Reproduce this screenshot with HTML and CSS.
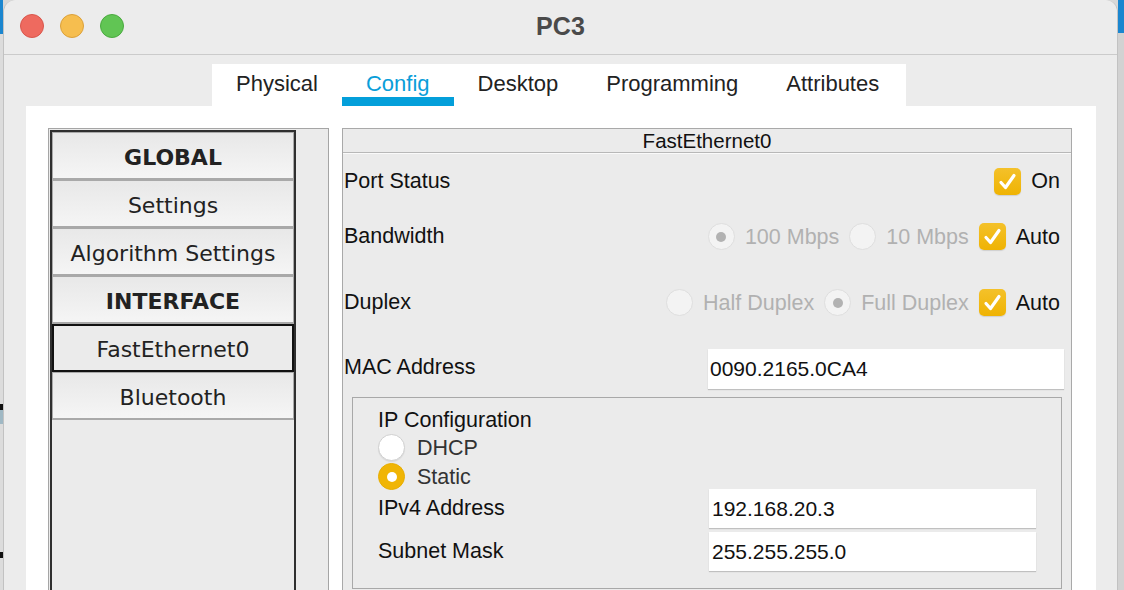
FILE: index.html
```html
<!DOCTYPE html>
<html>
<head>
<meta charset="utf-8">
<title>PC3</title>
<link rel="stylesheet" href="styles.css">
</head>
<body>
<div class="desk desk-left"></div>
<div class="window">
  <div class="titlebar">
    <div class="lights">
      <span class="light red"></span>
      <span class="light yellow"></span>
      <span class="light green"></span>
    </div>
    <div class="title">PC3</div>
    <div class="spacer"></div>
  </div>
  <div class="tabs-wrap">
    <div class="tabs">
      <div class="tab">Physical</div>
      <div class="tab active">Config</div>
      <div class="tab">Desktop</div>
      <div class="tab">Programming</div>
      <div class="tab">Attributes</div>
    </div>
  </div>
  <div class="content">
    <div class="sidebar">
      <div class="list">
        <div class="item bold">GLOBAL</div>
        <div class="item">Settings</div>
        <div class="item">Algorithm Settings</div>
        <div class="item bold">INTERFACE</div>
        <div class="item selected">FastEthernet0</div>
        <div class="item">Bluetooth</div>
      </div>
    </div>
    <div class="panel">
      <div class="panel-head">FastEthernet0</div>
      <div class="row row-port">
        <span class="label">Port Status</span>
        <div class="controls">
          <span class="check"><svg viewBox="0 0 27 27" width="27" height="27"><path d="M7 14.5 L11.5 19.5 L20 7.5" fill="none" stroke="#fff" stroke-width="3.2" stroke-linecap="round" stroke-linejoin="round"/></svg></span>
          <span class="opt-text">On</span>
        </div>
      </div>
      <div class="row row-bw">
        <span class="label">Bandwidth</span>
        <div class="controls">
          <span class="radio dis on"></span>
          <span class="opt-text dis">100 Mbps</span>
          <span class="radio dis"></span>
          <span class="opt-text dis">10 Mbps</span>
          <span class="check"><svg viewBox="0 0 27 27" width="27" height="27"><path d="M7 14.5 L11.5 19.5 L20 7.5" fill="none" stroke="#fff" stroke-width="3.2" stroke-linecap="round" stroke-linejoin="round"/></svg></span>
          <span class="opt-text">Auto</span>
        </div>
      </div>
      <div class="row row-dup">
        <span class="label">Duplex</span>
        <div class="controls">
          <span class="radio dis"></span>
          <span class="opt-text dis">Half Duplex</span>
          <span class="radio dis on"></span>
          <span class="opt-text dis">Full Duplex</span>
          <span class="check"><svg viewBox="0 0 27 27" width="27" height="27"><path d="M7 14.5 L11.5 19.5 L20 7.5" fill="none" stroke="#fff" stroke-width="3.2" stroke-linecap="round" stroke-linejoin="round"/></svg></span>
          <span class="opt-text">Auto</span>
        </div>
      </div>
      <div class="row row-mac">
        <span class="label">MAC Address</span>
        <div class="field mac">0090.2165.0CA4</div>
      </div>
      <div class="ipbox">
        <div class="ip-title">IP Configuration</div>
        <div class="radio-row">
          <span class="radio white"></span>
          <span class="opt-text">DHCP</span>
        </div>
        <div class="radio-row">
          <span class="radio yellow"></span>
          <span class="opt-text">Static</span>
        </div>
        <div class="ip-row ip-first">
          <span class="label">IPv4 Address</span>
          <div class="field ipf">192.168.20.3</div>
        </div>
        <div class="ip-row ip-second">
          <span class="label">Subnet Mask</span>
          <div class="field ipf">255.255.255.0</div>
        </div>
      </div>
    </div>
  </div>
</div>
<div class="desk desk-right"></div>
</body>
</html>
```
FILE: styles.css
```css
html, body {
  margin: 0;
  padding: 0;
  width: 1124px;
  height: 590px;
  overflow: hidden;
}
body {
  display: flex;
  font-family: "Liberation Sans", Arial, sans-serif;
  color: #111;
  background: #d8d8d8;
}
.desk {
  flex: none;
  height: 590px;
}
.desk-left {
  width: 3px;
  background: linear-gradient(to bottom, #1b86cf 0 34px, #dcdcdc 34px 404px, #111 404px 410px, #9fb8c4 410px 424px, #dcdcdc 424px 552px, #111 552px 558px, #dcdcdc 558px);
}
.desk-right {
  width: 6px;
  background: linear-gradient(to bottom, #1b86cf 0 33px, #d2d2d2 33px);
}
.window {
  flex: none;
  width: 1113px;
  height: 590px;
  background: #ececec;
  border-left: 1px solid #c2c2c2;
  border-right: 1px solid #c2c2c2;
  border-radius: 12px 12px 0 0;
  display: flex;
  flex-direction: column;
}

/* title bar */
.titlebar {
  flex: none;
  border-bottom: 1px solid #cbcbcb;
  display: grid;
  grid-template-columns: 1fr auto 1fr;
  align-items: center;
  padding-bottom: 2px;
  box-sizing: border-box;
  height: 55px;
}
.lights {
  display: flex;
  gap: 16px;
  padding-left: 16px;
}
.light {
  width: 24px;
  height: 24px;
  border-radius: 50%;
  box-sizing: border-box;
}
.red { background: #ee6a5f; border: 1px solid #d9564c; }
.yellow { background: #f6be4f; border: 1px solid #dca13a; }
.green { background: #61c554; border: 1px solid #4aaa3f; }
.title {
  font-weight: bold;
  font-size: 25px;
  color: #4a4a4a;
  letter-spacing: 0.2px;
}

/* tabs */
.tabs-wrap {
  flex: none;
  display: flex;
  justify-content: center;
  padding-top: 9px;
  padding-right: 3px;
}
.tabs {
  display: flex;
  background: #fff;
  width: 694px;
}
.tab {
  height: 42px;
  box-sizing: border-box;
  padding: 6px 24px 0;
  border-bottom: 9px solid transparent;
  font-size: 22px;
  line-height: 27px;
  color: #222;
}
.tab.active {
  color: #0a9ed9;
  border-bottom-color: #049fda;
}

/* content */
.content {
  flex: 1;
  background: #fff;
  margin: 0 21px 0 22px;
  padding: 22px 24px 0 22px;
  display: flex;
  gap: 13px;
  overflow: hidden;
}

/* sidebar */
.sidebar {
  width: 281px;
  flex: none;
  box-sizing: border-box;
  border: 1px solid #a5a5a5;
  background: #ebebeb;
  padding: 1px;
  height: 600px;
}
.list {
  width: 246px;
  box-sizing: border-box;
  border: 2px solid #2f2f2f;
  height: 100%;
  background: #ebebeb;
  font-family: "DejaVu Sans", Verdana, sans-serif;
  font-size: 22px;
  color: #222;
}
.item {
  height: 48px;
  box-sizing: border-box;
  border: 1px solid #a9a9a9;
  border-bottom-width: 2px;
  padding-top: 3px;
  background: linear-gradient(to bottom, #e8e8e8, #f5f5f5);
  display: flex;
  align-items: center;
  justify-content: center;
}
.item.bold {
  font-weight: bold;
}
.item.selected {
  border: 2px solid #111;
  padding-top: 2px;
  background: #ebebeb;
}

/* main panel */
.panel {
  width: 730px;
  flex: none;
  box-sizing: border-box;
  border: 1px solid #a9a9a9;
  background: #ebebeb;
  height: 600px;
  font-size: 21.5px;
}
.panel-head {
  height: 23px;
  border-bottom: 1px solid #b8b8b8;
  box-shadow: 0 1px 0 #fafafa;
  text-align: center;
  font-size: 20.5px;
  line-height: 23px;
  color: #111;
}
.row {
  display: flex;
  align-items: center;
  justify-content: space-between;
  padding: 0 11px 0 1px;
}
.row-port { height: 56px; }
.row-bw { height: 55px; }
.row-dup { height: 77px; }
.row-mac { height: 52px; padding-right: 7px; }
.label {
  color: #111;
}
.controls {
  display: flex;
  align-items: center;
  gap: 10px;
}
.opt-text {
  color: #111;
  line-height: 28px;
}
.opt-text.dis {
  color: #b1b1b1;
}
.check {
  width: 27px;
  height: 27px;
  border-radius: 5px;
  background: linear-gradient(to bottom, #f4c12a, #efb303);
  display: block;
  box-shadow: 0 1px 1px rgba(0,0,0,0.12);
}
.check svg { display: block; }
.radio {
  width: 27px;
  height: 27px;
  border-radius: 50%;
  box-sizing: border-box;
  display: flex;
  align-items: center;
  justify-content: center;
  flex: none;
}
.radio.dis {
  background: #f3f3f3;
  border: 1px solid #dedede;
}
.radio.dis.on::after {
  content: "";
  width: 10px;
  height: 10px;
  border-radius: 50%;
  background: #b2b2b2;
}
.radio.white {
  background: #fff;
  border: 1px solid #d0d0d0;
  box-shadow: 0 1px 1px rgba(0,0,0,0.08);
}
.radio.yellow {
  background: #f0b505;
  border: 1px solid #e8ad00;
}
.radio.yellow::after {
  content: "";
  width: 10px;
  height: 10px;
  border-radius: 50%;
  background: #fff;
}
.field {
  background: #fff;
  box-shadow: 0 1px 1px rgba(0,0,0,0.18);
  box-sizing: border-box;
  padding-left: 2px;
  display: flex;
  align-items: center;
  color: #111;
  font-size: 21px;
}
.field.mac {
  width: 356px;
  height: 40px;
  margin-top: 4px;
}

/* IP configuration box */
.ipbox {
  margin: 4px 9px 0 9px;
  border: 1px solid #a8a8a8;
  background: #ebebeb;
  padding: 9px 25px 17px 25px;
}
.ip-title {
  line-height: 26px;
  color: #111;
}
.radio-row {
  display: flex;
  align-items: center;
  gap: 12px;
  height: 29px;
}
.radio-row:first-of-type { margin-top: 3px; }
.radio-row .opt-text { color: #333; }
.ip-row {
  display: flex;
  align-items: center;
  justify-content: space-between;
}
.ip-first { margin-top: -2px; }
.ip-second { margin-top: 4px; }
.field.ipf {
  width: 327px;
  height: 39px;
  padding-left: 3px;
}
```
